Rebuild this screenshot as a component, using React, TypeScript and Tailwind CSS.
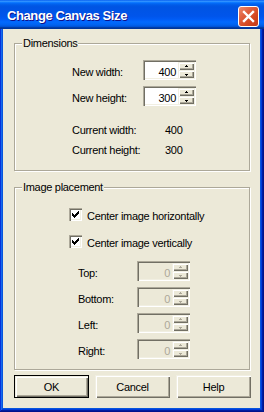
import React from "react";

const RAISED =
  "shadow-[inset_1px_1px_#F1EFE2,inset_2px_2px_#ffffff,inset_-1px_-1px_#716F64,inset_-2px_-2px_#ACA899]";
const SUNKEN =
  "shadow-[inset_1px_1px_#ACA899,inset_2px_2px_#716F64,inset_-1px_-1px_#ffffff,inset_-2px_-2px_#F1EFE2]";

function Arrow({ up, disabled }: { up?: boolean; disabled?: boolean }) {
  const c = disabled ? "#ACA899" : "#000000";
  return (
    <svg width="5" height="3" viewBox="0 0 5 3" shapeRendering="crispEdges">
      {up ? (
        <>
          <rect x="2" y="0" width="1" height="1" fill={c} />
          <rect x="1" y="1" width="3" height="1" fill={c} />
        </>
      ) : (
        <>
          <rect x="1" y="1" width="3" height="1" fill={c} />
          <rect x="2" y="2" width="1" height="1" fill={c} />
        </>
      )}
    </svg>
  );
}

function SpinBtn({ up, disabled }: { up?: boolean; disabled?: boolean }) {
  return (
    <div className={`flex h-[8px] items-center justify-center bg-[#ECE9D8] ${RAISED}`}>
      <Arrow up={up} disabled={disabled} />
    </div>
  );
}

function SpinBox({ value, disabled }: { value: string; disabled?: boolean }) {
  return (
    <div
      className={`flex h-[20px] w-[53px] p-[2px] ${disabled ? "bg-[#ECE9D8]" : "bg-white"} ${SUNKEN}`}
    >
      <div
        className={`flex-1 pr-[2px] pt-[3px] text-right leading-[14px] ${disabled ? "text-[#ACA899]" : "text-black"}`}
      >
        {value}
      </div>
      <div className="flex w-[16px] flex-col">
        <SpinBtn up disabled={disabled} />
        <SpinBtn disabled={disabled} />
      </div>
    </div>
  );
}

const CHECK_PIXELS: [number, number, number][] = [
  [6, 0, 1],
  [5, 1, 2],
  [0, 2, 1],
  [4, 2, 3],
  [0, 3, 2],
  [3, 3, 3],
  [0, 4, 5],
  [1, 5, 3],
  [2, 6, 1],
];

function CheckBox() {
  return (
    <div className={`flex h-[13px] w-[13px] items-center justify-center bg-white ${SUNKEN}`}>
      <svg width="7" height="7" viewBox="0 0 7 7" shapeRendering="crispEdges">
        {CHECK_PIXELS.map(([x, y, w], i) => (
          <rect key={i} x={x} y={y} width={w} height={1} fill="#000" />
        ))}
      </svg>
    </div>
  );
}

function CheckRow({ label, className = "" }: { label: string; className?: string }) {
  return (
    <div className={`flex h-[13px] items-start ${className}`}>
      <CheckBox />
      <span className="ml-[5px] mt-[1px] whitespace-nowrap leading-[14px]">{label}</span>
    </div>
  );
}

function BoxRow({ label, className = "" }: { label: string; className?: string }) {
  return (
    <div className={`flex h-[20px] items-start pl-[9px] ${className}`}>
      <span className="mt-[5px] w-[59px] leading-[14px]">{label}</span>
      <SpinBox value="0" disabled />
    </div>
  );
}

function Button({ label, def }: { label: string; def?: boolean }) {
  return (
    <div
      className={`flex h-[23px] w-[75px] items-center justify-center bg-[#ECE9D8] ${def ? "border border-black" : ""}`}
    >
      <div className={`flex h-full w-full items-center justify-center leading-[14px] ${RAISED}`}>
        {label}
      </div>
    </div>
  );
}

const GROUP =
  "w-[236px] border border-[#ACA899] shadow-[1px_1px_#ffffff,inset_1px_1px_#ffffff]";

export default function App() {
  return (
    <div className="font-['Liberation_Sans',Arial,sans-serif] text-[11px] tracking-[-0.3px] text-black">
      <div className="flex h-[412px] w-[264px] flex-col bg-[#0855DD] shadow-[inset_-1px_-1px_#00138c,inset_1px_1px_#0831d9,inset_-2px_-2px_#001ea0,inset_2px_2px_#166aee,inset_-3px_-3px_#003bda,inset_3px_3px_#0855dd]">
        {/* Title bar */}
        <div className="flex h-[29px] items-center justify-between pl-[7px] pr-[5px] pt-[3px] bg-[linear-gradient(to_bottom,#0058ee_0%,#3593ff_4%,#288eff_6%,#127dff_8%,#036ffc_10%,#0262ee_14%,#0057e5_20%,#0054e3_24%,#0055eb_56%,#005bf5_66%,#026afe_76%,#0062ef_86%,#0052d6_92%,#0040ab_94%,#003092_100%)]">
          <span className="text-[13px] font-bold leading-[16px] tracking-[-0.4px] text-white [text-shadow:1px_1px_#0f1089]">
            Change Canvas Size
          </span>
          <div className="flex h-[21px] w-[21px] items-center justify-center rounded-[3px] border border-white bg-[linear-gradient(135deg,#ee8a6c_0%,#e0603f_35%,#d2461f_70%,#c03a1a_100%)]">
            <svg width="19" height="19" viewBox="0 0 19 19">
              <path
                d="M5 5 L14 14 M14 5 L5 14"
                stroke="#ffffff"
                strokeWidth="2.4"
                strokeLinecap="square"
              />
            </svg>
          </div>
        </div>

        {/* Body */}
        <div className="mb-[4px] ml-[3px] mr-[4px] flex flex-1 flex-col bg-[#ECE9D8] pl-[11px] pt-[7px]">
          <fieldset className={GROUP}>
            <legend className="ml-[7px] bg-[#ECE9D8] px-[1px] leading-[14px]">Dimensions</legend>
            <div className="flex flex-col pb-[13px] pl-[57px] pt-[10px]">
              <div className="flex h-[20px] items-start">
                <span className="mt-[5px] w-[71px] leading-[14px]">New width:</span>
                <SpinBox value="400" />
              </div>
              <div className="mt-[6px] flex h-[20px] items-start">
                <span className="mt-[5px] w-[71px] leading-[14px]">New height:</span>
                <SpinBox value="300" />
              </div>
              <div className="mt-[17px] flex h-[14px] leading-[14px]">
                <span className="w-[93px]">Current width:</span>
                <span>400</span>
              </div>
              <div className="mt-[6px] flex h-[14px] leading-[14px]">
                <span className="w-[93px]">Current height:</span>
                <span>300</span>
              </div>
            </div>
          </fieldset>

          <fieldset className={`mt-[9px] ${GROUP}`}>
            <legend className="ml-[7px] bg-[#ECE9D8] px-[1px] leading-[14px]">Image placement</legend>
            <div className="flex flex-col pb-[10px] pl-[54px] pt-[14px]">
              <CheckRow label="Center image horizontally" />
              <CheckRow label="Center image vertically" className="mt-[14px]" />
              <BoxRow label="Top:" className="mt-[13px]" />
              <BoxRow label="Bottom:" className="mt-[6px]" />
              <BoxRow label="Left:" className="mt-[6px]" />
              <BoxRow label="Right:" className="mt-[6px]" />
            </div>
          </fieldset>

          <div className="mt-[5px] flex gap-[6px]">
            <Button label="OK" def />
            <Button label="Cancel" />
            <Button label="Help" />
          </div>
        </div>
      </div>
    </div>
  );
}
